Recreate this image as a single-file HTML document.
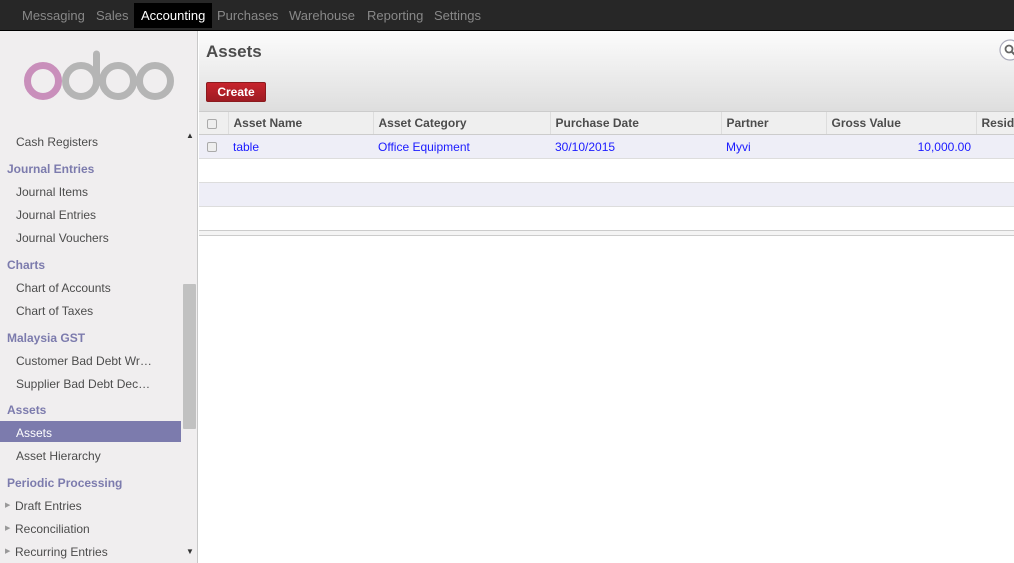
<!DOCTYPE html>
<html><head><style>
*{margin:0;padding:0;box-sizing:border-box}
body{width:1014px;height:563px;overflow:hidden;font-family:"Liberation Sans",Arial,sans-serif;font-size:13px;background:#fff;position:relative}
#top{position:absolute;left:0;top:0;width:1014px;height:31px;background:#272727;border-bottom:1px solid #000}
#top span{position:absolute;top:0;height:29px;line-height:31px;color:#888;font-size:13px}
#top span.act{background:#000;color:#fff;padding:0 7px;top:3px;height:25px;line-height:25px}
#side{position:absolute;left:0;top:31px;width:198px;height:532px;background:#f0eeef;border-right:1px solid #c8c8c8}
.it{position:absolute;left:16px;font-size:12px;color:#4c4c4c}
.hd{position:absolute;left:7px;font-size:12px;font-weight:bold;color:#7c7bad}
.sel{position:absolute;left:0;top:390px;width:181px;height:21px;background:#7c7bad}
#sb{position:absolute;left:183px;top:253px;width:13px;height:145px;background:#c1c1c1;border-radius:1px}
#hdr{position:absolute;left:199px;top:31px;width:815px;height:80px;background:linear-gradient(#fcfcfc,#dedede)}
#hdr h1{position:absolute;left:7px;top:11px;font-size:17px;color:#4c4c4c}
#create{position:absolute;left:7px;top:51px;width:60px;height:20px;background:linear-gradient(#c7242d,#9e1b22);border:1px solid #8b1a1e;border-radius:2px;color:#fff;font-size:12px;font-weight:bold;text-align:center;line-height:18px}
table{position:absolute;left:199px;top:111px;border-collapse:collapse;width:830px;font-size:12px}
th{height:23px;background:#efefef;border-top:1px solid #ccc;border-bottom:1px solid #ccc;border-left:1px solid #ddd;text-align:left;font-weight:bold;color:#4c4c4c;padding-left:5px}
td{height:24px;border-bottom:1px solid #ddd;color:#1a1aff;padding-left:5px}
.cb{display:inline-block;width:10px;height:10px;border:1px solid #aaa;border-radius:2px;background:#eee;vertical-align:middle}
</style></head><body>
<div id="top">
<span style="left:22px">Messaging</span><span style="left:96px">Sales</span><span class="act" style="left:134px">Accounting</span><span style="left:217px">Purchases</span><span style="left:289px">Warehouse</span><span style="left:367px">Reporting</span><span style="left:434px">Settings</span>
</div>
<div id="side">
<svg style="position:absolute;left:22px;top:18px" width="156" height="56" viewBox="0 0 156 56">
<circle cx="21" cy="32" r="15.5" fill="none" stroke="#c98fbb" stroke-width="7"/>
<circle cx="59" cy="32" r="15.5" fill="none" stroke="#b5b5b5" stroke-width="7"/>
<line x1="74.5" y1="5" x2="74.5" y2="33" stroke="#b5b5b5" stroke-width="7" stroke-linecap="round"/>
<circle cx="96" cy="32" r="15.5" fill="none" stroke="#b5b5b5" stroke-width="7"/>
<circle cx="133" cy="32" r="15.5" fill="none" stroke="#b5b5b5" stroke-width="7"/>
</svg>
<div class="it" style="top:104px">Cash Registers</div>
<div style="position:absolute;left:186px;top:100px;font-size:8px;color:#333">▲</div>
<div class="hd" style="top:131px">Journal Entries</div>
<div class="it" style="top:154px">Journal Items</div>
<div class="it" style="top:177px">Journal Entries</div>
<div class="it" style="top:200px">Journal Vouchers</div>
<div class="hd" style="top:227px">Charts</div>
<div class="it" style="top:250px">Chart of Accounts</div>
<div class="it" style="top:273px">Chart of Taxes</div>
<div class="hd" style="top:300px">Malaysia GST</div>
<div class="it" style="top:323px">Customer Bad Debt Wr…</div>
<div class="it" style="top:346px">Supplier Bad Debt Dec…</div>
<div class="hd" style="top:372px">Assets</div>
<div class="sel"></div>
<div class="it" style="top:395px;color:#fff">Assets</div>
<div class="it" style="top:418px">Asset Hierarchy</div>
<div class="hd" style="top:445px">Periodic Processing</div>
<div class="it" style="top:468px;left:15px">Draft Entries</div>
<div class="it" style="top:491px;left:15px">Reconciliation</div>
<div class="it" style="top:514px;left:15px">Recurring Entries</div>
<div style="position:absolute;left:5px;top:470px;font-size:7px;color:#999">▶</div>
<div style="position:absolute;left:5px;top:493px;font-size:7px;color:#999">▶</div>
<div style="position:absolute;left:5px;top:516px;font-size:7px;color:#999">▶</div>
<div style="position:absolute;left:186px;top:516px;font-size:8px;color:#333">▼</div>
<div id="sb"></div>
</div>
<div id="hdr"><h1>Assets</h1><div id="create">Create</div>
<svg style="position:absolute;left:800px;top:8px" width="24" height="24" viewBox="0 0 24 24"><circle cx="11" cy="11" r="10" fill="#fff" stroke="#aab" stroke-width="1.2"/><circle cx="10" cy="10" r="3.5" fill="none" stroke="#666" stroke-width="1.8"/><line x1="12.5" y1="12.5" x2="16" y2="16" stroke="#666" stroke-width="2"/></svg>
</div>
<table>
<tr><th style="width:29px;border-left:none;padding-left:8px"><span class="cb"></span></th><th style="width:145px">Asset Name</th><th style="width:177px">Asset Category</th><th style="width:171px">Purchase Date</th><th style="width:105px">Partner</th><th style="width:150px">Gross Value</th><th>Resid</th></tr>
<tr style="background:#eeeef7"><td style="padding-left:8px"><span class="cb"></span></td><td>table</td><td>Office Equipment</td><td>30/10/2015</td><td>Myvi</td><td style="text-align:right;padding-right:5px">10,000.00</td><td></td></tr>
<tr><td colspan="7"></td></tr>
<tr style="background:#eeeef7"><td colspan="7"></td></tr>
<tr><td colspan="7"></td></tr>
</table>
<div style="position:absolute;left:199px;top:230px;width:815px;height:6px;border-top:1px solid #ccc;border-bottom:1px solid #ccc;background:#f4f4f4"></div>
</body></html>
